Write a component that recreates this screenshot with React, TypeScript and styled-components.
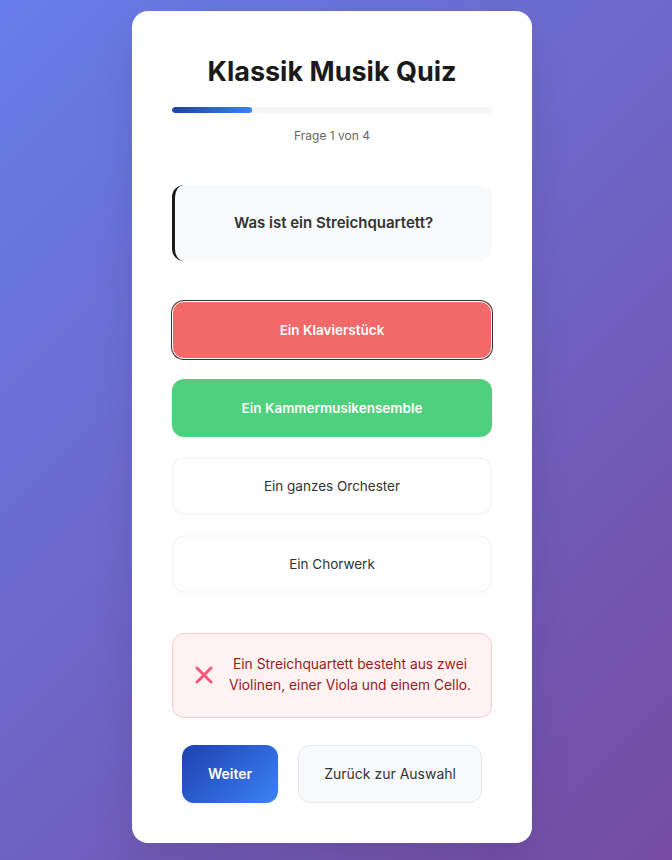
import React from "react";
import styled, { createGlobalStyle, css } from "styled-components";

const Global = createGlobalStyle`
  * { box-sizing: border-box; }
  html, body { margin: 0; padding: 0; }
  body {
    min-height: 100vh;
    font-family: Inter, "Noto Sans", sans-serif;
    background: linear-gradient(135deg, #667eea 0%, #764ba2 100%);
  }
`;

const Page = styled.div`
  display: flex;
  justify-content: center;
  align-items: flex-start;
  padding: 11px 8px 18px 0;
`;

const Card = styled.div`
  width: 400px;
  background: #fff;
  border-radius: 16px;
  padding: 40px;
  box-shadow: 0 20px 40px rgba(0, 0, 0, 0.1);
`;

const Title = styled.h1`
  margin: 4px 0 0;
  font-size: 27px;
  line-height: 34px;
  font-weight: 700;
  color: #1a1a1a;
  text-align: center;
`;

const Progress = styled.div`
  margin-top: 18px;
  height: 6px;
  border-radius: 3px;
  background: #f3f4f6;
  overflow: hidden;
`;

const ProgressFill = styled.div`
  height: 100%;
  border-radius: 3px;
  background: linear-gradient(90deg, #1e40af, #3b82f6);
`;

const Counter = styled.div`
  margin-top: 15px;
  font-size: 12px;
  line-height: 15px;
  color: #666;
  text-align: center;
`;

const Question = styled.div`
  margin-top: 42px;
  background: #f8f9fa;
  border-left: 3px solid #1a1a1a;
  border-radius: 12px;
  padding: 24px;
  font-size: 15px;
  line-height: 28px;
  font-weight: 600;
  color: #333;
  text-align: center;
`;

const Options = styled.div`
  margin-top: 40px;
  display: flex;
  flex-direction: column;
  gap: 20px;
`;

type Status = "wrong" | "correct" | "idle";

const Option = styled.button<{ $status: Status; $focused?: boolean }>`
  display: block;
  width: 100%;
  padding: 18px 16px;
  border-radius: 12px;
  border: 2px solid #f6f7f9;
  background: #fff;
  font-family: inherit;
  font-size: 13.5px;
  line-height: 18px;
  color: #333;
  text-align: center;
  cursor: default;
  ${(p) =>
    p.$status === "wrong" &&
    css`
      opacity: 0.8;
      background: #ef4444;
      border-color: #ef4444;
      color: #fff;
      font-weight: 600;
    `}
  ${(p) =>
    p.$status === "correct" &&
    css`
      opacity: 0.8;
      background: #22c55e;
      border-color: #22c55e;
      color: #fff;
      font-weight: 600;
    `}
  ${(p) =>
    p.$focused &&
    css`
      outline: 1px solid #fff;
      outline-offset: -1px;
      box-shadow: 0 0 0 1px #000;
    `}
`;

const Feedback = styled.div`
  margin-top: 40px;
  display: flex;
  align-items: center;
  gap: 12px;
  padding: 20px 16px 21px 22px;
  border: 1px solid #fecaca;
  border-radius: 12px;
  background: #fef2f2;
  color: #991b1b;
  font-size: 13.8px;
  line-height: 21px;
`;

const FeedbackText = styled.div`
  flex: 1;
  text-align: center;
`;

const Actions = styled.div`
  margin-top: 27px;
  display: flex;
  justify-content: center;
  gap: 20px;
`;

const PrimaryButton = styled.button`
  padding: 20px 26px;
  border: none;
  border-radius: 12px;
  background: linear-gradient(135deg, #1e40af 0%, #3b82f6 100%);
  color: #fff;
  font-family: inherit;
  font-size: 14px;
  line-height: 18px;
  font-weight: 600;
`;

const SecondaryButton = styled.button`
  padding: 19px 25px;
  border: 1px solid #e5e7eb;
  border-radius: 12px;
  background: #f8f9fa;
  color: #333;
  font-family: inherit;
  font-size: 14px;
  line-height: 18px;
`;

const CrossIcon = () => (
  <svg width="18" height="18" viewBox="0 0 18 18" aria-hidden="true">
    <path d="M2 2 L16 16 M16 2 L2 16" stroke="#f4587a" strokeWidth="3" strokeLinecap="round" />
  </svg>
);

const options: { label: string; status: Status; focused?: boolean }[] = [
  { label: "Ein Klavierstück", status: "wrong", focused: true },
  { label: "Ein Kammermusikensemble", status: "correct" },
  { label: "Ein ganzes Orchester", status: "idle" },
  { label: "Ein Chorwerk", status: "idle" },
];

export default function App() {
  const current = 1;
  const total = 4;
  return (
    <>
      <Global />
      <Page>
        <Card>
          <Title>Klassik Musik Quiz</Title>
          <Progress>
            <ProgressFill style={{ width: `${(current / total) * 100}%` }} />
          </Progress>
          <Counter>
            Frage {current} von {total}
          </Counter>
          <Question>Was ist ein Streichquartett?</Question>
          <Options>
            {options.map((o) => (
              <Option key={o.label} $status={o.status} $focused={o.focused} disabled>
                {o.label}
              </Option>
            ))}
          </Options>
          <Feedback>
            <CrossIcon />
            <FeedbackText>
              Ein Streichquartett besteht aus zwei Violinen, einer Viola und einem Cello.
            </FeedbackText>
          </Feedback>
          <Actions>
            <PrimaryButton>Weiter</PrimaryButton>
            <SecondaryButton>Zurück zur Auswahl</SecondaryButton>
          </Actions>
        </Card>
      </Page>
    </>
  );
}
